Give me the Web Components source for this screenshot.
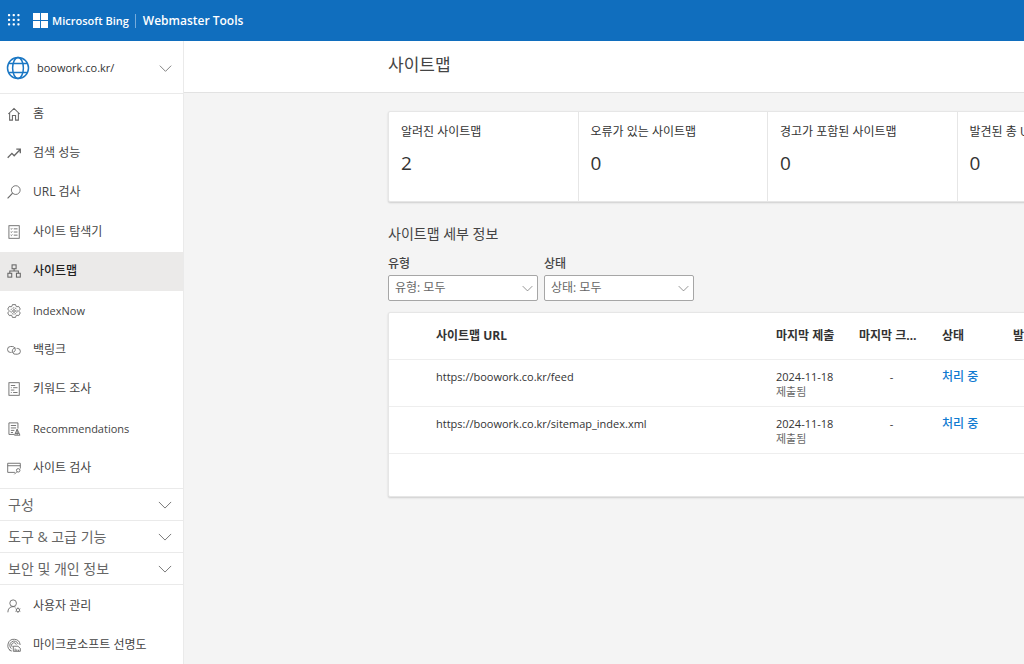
<!DOCTYPE html>
<html lang="ko">
<head>
<meta charset="utf-8">
<meta name="viewport" content="width=device-width, initial-scale=1">
<title>사이트맵 - Bing Webmaster Tools</title>
<style>
  html, body { margin: 0; }
  body {
    font-family: "Open Sans", "Noto Sans CJK KR", sans-serif;
    font-size: 12px;
    line-height: 16px;
    color: #444;
    background: #f4f4f4;
    overflow-x: hidden;
  }
</style>
</head>
<body>
<webmaster-app></webmaster-app>

<script>
const define = (name, html, setup) => {
  const template = document.createElement('template');
  template.innerHTML = html;
  customElements.define(name, class extends HTMLElement {
    connectedCallback() {
      if (this.shadowRoot) return;
      this.attachShadow({ mode: 'open' }).append(template.content.cloneNode(true));
      if (setup) setup(this, this.shadowRoot);
    }
  });
};

const ICONS = {
  waffle: '<g fill="currentColor" stroke="none">' + [1, 6, 11].map(y => [1, 6, 11].map(x => `<rect x="${x}" y="${y}" width="2.4" height="2.4" rx=".8"/>`).join('')).join('') + '</g>',
  windows: '<g fill="currentColor" stroke="none"><path d="M0 0h7.5v7.5H0zM8.5 0H16v7.5H8.5zM0 8.5h7.5V16H0zM8.5 8.5H16V16H8.5z"/></g>',
  globe: '<g stroke-width="1"><circle cx="8" cy="8" r="7"/><ellipse cx="8" cy="8" rx="3.6" ry="7"/><path d="M1.8 5h12.4M1.8 11h12.4"/></g>',
  chevron: '<path d="M1 4.5l7 7 7-7"/>',
  home: '<path d="M1.5 8L8 1.6 14.5 8M3 6.8v8.2h3.2V9.8h3.6V15H13V6.8" stroke-width="1.2"/>',
  trend: '<path d="M.8 13.4l4.8-5 2.6 2.8 6.6-7M10.6 3.6h4.6v4.6" stroke-width="1.5"/>',
  search: '<circle cx="10" cy="5.8" r="5"/><path d="M6.4 9.4L.7 15.2" stroke-width="1.3"/>',
  explorer: '<rect x="2.2" y=".8" width="11.8" height="14.4"/><path d="M4.3 4.2l.7.7 1-1.3M4.3 7.8l.7.7 1-1.3M4.3 11.4l.7.7 1-1.3M7.7 4.4H12M7.7 8H12M7.7 11.6H12"/>',
  sitemap: '<g stroke-width="1.2"><rect x="5.8" y="1" width="4.6" height="4.4"/><rect x="1" y="10.6" width="4.4" height="4.4"/><rect x="10.8" y="10.6" width="4.4" height="4.4"/><path d="M8.1 5.4V8M3.2 10.6V8h9.8v2.6"/></g>',
  gear: '<path d="M6.2.7h3.6l.6 2 .9.5 2-.5 1.9 3.1-1.4 1.4v1.6l1.4 1.4-1.9 3.1-2-.5-.9.5-.6 2H6.2l-.6-2-.9-.5-2 .5-1.9-3.1 1.4-1.4V7.2L.8 5.8l1.9-3.1 2 .5.9-.5z" stroke-linejoin="round"/><circle cx="8" cy="8" r="3.6" stroke-dasharray="2 1"/><circle cx="8" cy="8" r="1.5"/>',
  link: '<path d="M9.2 8.8A3.5 3.5 0 0 0 6 4H4a3.4 3.4 0 0 0 0 6.8h1.2"/><path d="M6.7 7.2A3.5 3.5 0 0 0 10 12.8h2a3.3 3.3 0 0 0 0-6.6h-1"/><path d="M9.2 8.8c-.5 1-1.1 1.6-2.2 1.9M6.7 7.2C7.4 6.1 8.3 5.5 9.5 5.4"/>',
  keyword: '<rect x="2.2" y=".8" width="11.8" height="14.4"/><path d="M4.4 4h5M7 6.5h5M4.4 9.2h4M7 12H12M4.4 6.5h1M4.4 12h1"/>',
  recommend: '<path d="M8 14.2H2.2V1h10.3v6.5M4.4 4h6M4.4 6.8h6M4.4 9.6h4M4.4 12h2.5"/><path d="M11.6 8.2l-3 6.9h6.2zM9.3 13h4.6M11.6 8.5v6.3"/>',
  scan: '<path d="M9 13H.8V2.6h14.4v6M.8 5.4h14.4"/><circle cx="12.8" cy="10.7" r="2"/><path d="M11.4 12.2l-3 3"/>',
  user: '<circle cx="7" cy="4.8" r="3.8"/><path d="M1 15.2c0-4.2 2.4-6.5 6-6.5 1.1 0 1.9.2 2.7.6"/><circle cx="12.5" cy="12.7" r="1.9"/><path d="M12.5 9.7v1M12.5 14.7v1M9.8 11.1l1 .6M14.2 13.7l1 .6M15.2 11.1l-1 .6M10.8 13.7l-1 .6"/>',
  clarity: '<path d="M5.5 15A7 7 0 1 1 15 8M5 12.2A4.9 4.9 0 1 1 12.8 7M6.5 10.4A2.7 2.7 0 1 1 10.6 7.6M2.2 13l1.6 1.5"/><path d="M7.2 15.2V9.4h5.3l2.7 2.4v3.4zM9.3 15v-3M11.2 15v-2M13.2 15v-1.6"/>'
};

define('ui-icon', `
  <style>
    :host { display: inline-flex; width: 14px; height: 14px; flex: none; color: #666; }
    svg { width: 100%; height: 100%; fill: none; stroke: currentColor; stroke-width: 1; }
  </style>
  <svg viewBox="0 0 16 16" aria-hidden="true"></svg>`,
  (el, root) => { root.querySelector('svg').innerHTML = ICONS[el.getAttribute('name')] || ''; });

define('app-header', `
  <style>
    :host { display: flex; align-items: center; height: 41px; box-sizing: border-box; padding-left: 7px; background: #106ebe; color: #fff; }
    button { display: flex; padding: 0; border: 0; background: none; color: inherit; }
    ui-icon { color: #fff; }
    button ui-icon { width: 15px; height: 15px; }
    a { display: flex; align-items: center; color: inherit; text-decoration: none; font-weight: 600; white-space: nowrap; }
    .brand { gap: 4px; margin-left: 11px; font-size: 11px; }
    .brand ui-icon { width: 15px; height: 15px; }
    .product { margin-left: 6px; padding-left: 7px; border-left: 1px solid #76abdb; line-height: 14px; }
  </style>
  <button aria-label="앱 시작 관리자"><ui-icon name="waffle"></ui-icon></button>
  <a class="brand" href="#bing"><ui-icon name="windows"></ui-icon><span>Microsoft Bing</span></a>
  <a class="product" href="#home">Webmaster Tools</a>`);

define('site-picker', `
  <style>
    :host { display: block; border-bottom: 1px solid #eaeaea; }
    button { display: flex; align-items: center; width: 100%; height: 52px; padding: 2px 11px 0 6px; border: 0; background: none; font: inherit; font-size: 11px; color: #333; text-align: left; gap: 7px; }
    .globe { width: 24px; height: 24px; color: #1a77c4; }
    .chevron { width: 13px; height: 13px; }
    span { flex: 1; }
  </style>
  <button aria-haspopup="listbox"><ui-icon class="globe" name="globe"></ui-icon><span><slot></slot></span><ui-icon class="chevron" name="chevron"></ui-icon></button>`);

define('nav-item', `
  <style>
    :host { display: grid; min-height: 39px; }
    a { display: flex; align-items: center; gap: 12px; padding: 0 7px; color: #444; text-decoration: none; white-space: nowrap; }
    :host([selected]) a { background: #ebeae9; color: #222; font-weight: 500; }
    :host([lang="en"]) a { font-size: 11px; }
  </style>
  <a href="#"><ui-icon></ui-icon><span><slot></slot></span></a>`,
  (el, root) => {
    const icon = document.createElement('ui-icon');
    icon.setAttribute('name', el.getAttribute('icon'));
    root.querySelector('ui-icon').replaceWith(icon);
    if (el.hasAttribute('selected')) root.querySelector('a').setAttribute('aria-current', 'page');
  });

define('nav-group', `
  <style>
    :host { display: block; border-top: 1px solid #eaeaea; }
    button { display: flex; align-items: center; justify-content: space-between; width: 100%; height: 31px; padding: 0 11px 0 8px; border: 0; background: none; font: inherit; font-size: 14px; color: #666; }
  </style>
  <button aria-expanded="false"><span><slot></slot></span><ui-icon name="chevron"></ui-icon></button>`);

define('side-nav', `
  <style>
    :host { display: block; background: #fff; border-right: 1px solid #eaeaea; }
    .primary { display: grid; grid-auto-rows: 1fr; min-height: 394px; }
    .secondary { display: grid; grid-auto-rows: 39px; border-top: 1px solid #eaeaea; padding-top: 1px; }
  </style>
  <site-picker>boowork.co.kr/</site-picker>
  <nav>
    <div class="primary">
      <nav-item icon="home">홈</nav-item>
      <nav-item icon="trend">검색 성능</nav-item>
      <nav-item icon="search">URL 검사</nav-item>
      <nav-item icon="explorer">사이트 탐색기</nav-item>
      <nav-item icon="sitemap" selected>사이트맵</nav-item>
      <nav-item icon="gear" lang="en">IndexNow</nav-item>
      <nav-item icon="link">백링크</nav-item>
      <nav-item icon="keyword">키워드 조사</nav-item>
      <nav-item icon="recommend" lang="en">Recommendations</nav-item>
      <nav-item icon="scan">사이트 검사</nav-item>
    </div>
    <nav-group>구성</nav-group>
    <nav-group>도구 &amp; 고급 기능</nav-group>
    <nav-group>보안 및 개인 정보</nav-group>
    <div class="secondary">
      <nav-item icon="user">사용자 관리</nav-item>
      <nav-item icon="clarity">마이크로소프트 선명도</nav-item>
    </div>
  </nav>`);

define('stat-card', `
  <style>
    :host { display: block; box-sizing: border-box; padding: 12px; border-right: 1px solid #e6e6e6; white-space: nowrap; }
    .label { color: #333; }
    .value { margin-top: 11px; font-size: 19px; line-height: 24px; color: #333; }
  </style>
  <div class="label"><slot></slot></div>
  <div class="value"><slot name="value"></slot></div>`);

define('filter-select', `
  <style>
    :host { display: block; }
    label { display: block; line-height: 16px; margin-bottom: 3px; color: #444; font-weight: 500; }
    .box { position: relative; }
    select { appearance: none; display: block; width: 100%; height: 26px; padding: 0 24px 0 6px; border: 1px solid #a6a6a6; border-radius: 2px; background: #fff; font: inherit; color: #666; }
    ui-icon { position: absolute; right: 5px; top: 8px; width: 11px; height: 11px; pointer-events: none; }
  </style>
  <label for="field"></label>
  <div class="box"><select id="field"><option></option></select><ui-icon name="chevron"></ui-icon></div>`,
  (el, root) => {
    root.querySelector('label').textContent = el.getAttribute('label');
    root.querySelector('option').textContent = el.getAttribute('value');
  });

define('sitemap-table', `
  <style>
    :host { display: block; background: #fff; border: 1px solid #e6e6e6; border-radius: 2px; box-shadow: 0 1px 2px rgba(0,0,0,.16); box-sizing: border-box; padding-bottom: 42px; }
    table { width: 100%; table-layout: fixed; border-collapse: collapse; }
    th, td { box-sizing: border-box; padding: 0 12px; text-align: left; border-bottom: 1px solid #eee; white-space: nowrap; }
    th { height: 46px; font-weight: 700; color: #333; overflow: hidden; text-overflow: ellipsis; }
    td { height: 47px; vertical-align: top; padding-top: 9px; font-size: 11px; color: #333; }
    .pad { width: 35px; padding: 0; }
    .url { width: 340px; }
    .date { width: 83px; }
    .state { width: 71px; }
    .total { width: 229px; }
    td.crawl { text-align: center; padding-right: 6px; }
    small { display: block; font-size: 11px; line-height: 14px; color: #666; }
    a { color: #0f7ad1; font-size: 12px; text-decoration: none; font-weight: 500; }
  </style>
  <table>
    <thead><tr>
      <th class="pad"></th><th class="url">사이트맵 URL</th><th class="date">마지막 제출</th><th class="date">마지막 크롤링</th><th class="state">상태</th><th class="total">발견된 URL</th>
    </tr></thead>
    <tbody></tbody>
  </table>`,
  (el, root) => {
    for (const url of ['https://boowork.co.kr/feed', 'https://boowork.co.kr/sitemap_index.xml']) {
      root.querySelector('tbody').insertAdjacentHTML('beforeend',
        `<tr><td class="pad"></td><td>${url}</td><td>2024-11-18<small>제출됨</small></td><td class="crawl">-</td><td><a href="#status">처리 중</a></td><td></td></tr>`);
    }
  });

define('sitemaps-page', `
  <style>
    :host { display: block; min-width: 0; overflow: hidden; }
    header { padding: 12px 0 15px 204px; background: #fff; border-bottom: 1px solid #e2e2e2; }
    h1 { margin: 0; font-size: 17px; line-height: 24px; font-weight: 400; color: #444; }
    .content { margin-left: 204px; padding-top: 18px; min-width: 760px; }
    .stats { display: grid; grid-template-columns: repeat(4, 1fr); min-height: 89px; background: #fff; border: 1px solid #e6e6e6; border-radius: 2px; box-shadow: 0 1px 2px rgba(0,0,0,.16); }
    h2 { margin: 22px 0 12px; font-size: 14px; line-height: 20px; font-weight: 400; color: #444; }
    .filters { display: grid; grid-template-columns: 150px 150px; gap: 6px; margin-bottom: 11px; }
  </style>
  <header><h1>사이트맵</h1></header>
  <div class="content">
    <section class="stats">
      <stat-card>알려진 사이트맵<span slot="value">2</span></stat-card>
      <stat-card>오류가 있는 사이트맵<span slot="value">0</span></stat-card>
      <stat-card>경고가 포함된 사이트맵<span slot="value">0</span></stat-card>
      <stat-card>발견된 총 URL<span slot="value">0</span></stat-card>
    </section>
    <h2>사이트맵 세부 정보</h2>
    <div class="filters">
      <filter-select label="유형" value="유형: 모두"></filter-select>
      <filter-select label="상태" value="상태: 모두"></filter-select>
    </div>
    <sitemap-table></sitemap-table>
  </div>`);

define('webmaster-app', `
  <style>
    :host { display: grid; grid-template: auto 1fr / 184px minmax(0, 1fr); min-height: 100vh; }
    app-header { grid-column: 1 / -1; }
  </style>
  <app-header></app-header>
  <side-nav></side-nav>
  <sitemaps-page></sitemaps-page>`);
</script>
</body>
</html>
